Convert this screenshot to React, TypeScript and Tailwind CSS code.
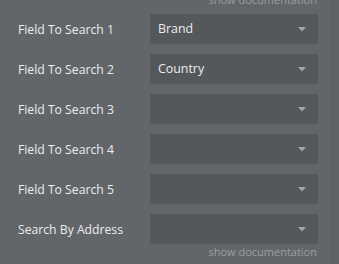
const fields = [
  { label: "Field To Search 1", value: "Brand" },
  { label: "Field To Search 2", value: "Country" },
  { label: "Field To Search 3", value: "" },
  { label: "Field To Search 4", value: "" },
  { label: "Field To Search 5", value: "" },
  { label: "Search By Address", value: "" },
];

function Caret() {
  return (
    <svg width="8" height="5" viewBox="0 0 8 5" className="shrink-0">
      <path d="M0 0H8L4 4.5Z" fill="#a3a6a9" />
    </svg>
  );
}

export default function App() {
  return (
    <div className="flex h-[264px] w-[339px] overflow-hidden bg-[#62666a] font-['Open_Sans',sans-serif]">
      <div className="flex w-[332px] flex-col pl-[18px] pr-[14px]">
        <p className="-mt-[8px] mb-[6px] pr-px text-right text-[11px] leading-4 text-[#9a9ea1]">
          show documentation
        </p>
        <ul className="flex flex-col gap-[10px]">
          {fields.map((f) => (
            <li key={f.label} className="flex h-[30px] items-center">
              <span className="w-[132px] pt-[2px] text-[12.2px] text-[#ececec]">{f.label}</span>
              <div className="flex h-full flex-1 items-center justify-between bg-[#54585b] pl-2 pr-[12px]">
                <span className="pt-px text-[12.4px] text-[#ececec]">{f.value}</span>
                <Caret />
              </div>
            </li>
          ))}
        </ul>
        <p className="pr-px text-right text-[11px] leading-4 text-[#9a9ea1]">show documentation</p>
      </div>
      <div className="flex-1 border-l border-[#5a5e61] bg-[#5f6366]" />
    </div>
  );
}
